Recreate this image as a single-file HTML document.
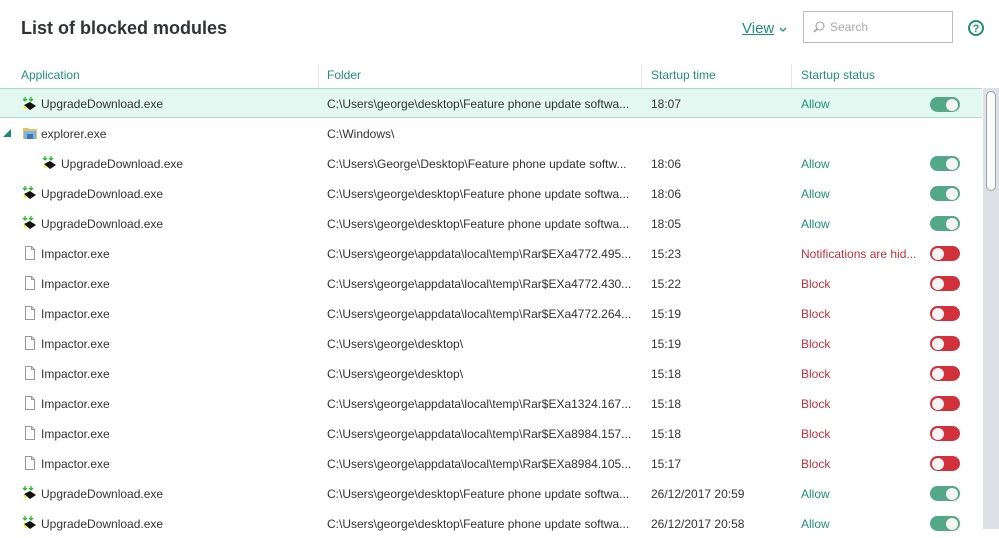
<!DOCTYPE html>
<html><head><meta charset="utf-8"><style>
*{margin:0;padding:0;box-sizing:border-box}
body{width:999px;height:529px;overflow:hidden;background:#fff;font-family:"Liberation Sans",sans-serif;font-size:12px;color:#333;position:relative}
.a{position:absolute;white-space:nowrap}
h1{position:absolute;left:21px;top:18px;font-size:18px;font-weight:bold;color:#2f3338}
.hd{position:absolute;top:68px;color:#1f9274;font-size:12px}
.sep{position:absolute;top:64px;width:1px;height:24px;background:#e6e6e6}
.row{position:absolute;left:0;width:982px;height:30px}
.row span{position:absolute;top:9px;white-space:nowrap}
.sel{background:#e3f8f0;border-top:1px solid #a9dcc9;border-bottom:1px solid #a9dcc9}
.sel span{top:8px}
.tg{position:absolute;left:930px;top:8px;width:30px;height:15px;border-radius:8px}
.tg.g{background:#52a887}.tg.r{background:#d1313b}
.tg i{position:absolute;top:1.5px;width:12px;height:12px;border-radius:50%;background:#f4f4f4}
.tg.g i{right:2px}.tg.r i{left:2px}
.al{color:#1f9274}.bl{color:#c0323a}
.ic{position:absolute;top:7px;width:16px;height:16px}
</style></head><body>
<h1>List of blocked modules</h1>
<div class="a" style="left:742px;top:20px;font-size:15px;color:#1f9274;text-decoration:underline">View</div>
<svg class="a" style="left:779px;top:27px" width="8" height="6"><path d="M1 1l3 3 3-3" stroke="#1f9274" stroke-width="1.3" fill="none"/></svg>
<div class="a" style="left:803px;top:11px;width:150px;height:32px;border:1px solid #bcbcbc"></div>
<svg class="a" style="left:813px;top:21px" width="12" height="12"><circle cx="7" cy="5" r="4" stroke="#999" fill="none"/><path d="M4 8l-3 3" stroke="#999" stroke-width="1.3"/></svg>
<div class="a" style="left:830px;top:20px;color:#aaa;font-size:12px">Search</div>
<svg class="a" style="left:967px;top:19px" width="18" height="18"><circle cx="9" cy="9" r="7" stroke="#1f9274" stroke-width="2" fill="none"/><text x="9" y="13" font-size="11" font-weight="bold" text-anchor="middle" fill="#1f9274" font-family="Liberation Sans">?</text></svg>
<div class="hd" style="left:21px">Application</div>
<div class="hd" style="left:327px">Folder</div>
<div class="hd" style="left:651px">Startup time</div>
<div class="hd" style="left:801px">Startup status</div>
<div class="sep" style="left:318px"></div><div class="sep" style="left:641px"></div><div class="sep" style="left:791px"></div>
<div class="a" style="left:0;top:88px;width:982px;height:1px;background:#e0e0e0"></div>
<div class="a" style="left:983px;top:88px;width:16px;height:441px;background:#dde0e4"></div>
<div class="a" style="left:986px;top:91px;width:10px;height:100px;background:#fbfbfb;border:1px solid #9aa0a6;border-radius:5px"></div>
<div id="rows"></div>
<script>
var U='<svg class="ic" viewBox="0 0 16 16"><path d="M3 1v4M1 3l2 2 2-2M9 1v4M7 3l2 2 2-2" stroke="#2bbb2b" stroke-width="1.3" fill="none"/><path d="M2 9l6-3 6 4-6 4z" fill="#111"/><path d="M2 10l2 3" stroke="#ee2" stroke-width="2"/></svg>';
var F='<svg class="ic" viewBox="0 0 16 16"><path d="M3.5 1.5h6l3 3v10h-9z" fill="#fff" stroke="#999"/><path d="M9.5 1.5v3h3" fill="none" stroke="#999"/></svg>';
var E='<svg class="ic" viewBox="0 0 16 16"><path d="M1 3h5l1 1h8v10H1z" fill="#e8c25a"/><rect x="2" y="6" width="12" height="8" fill="#7fb2dc"/><rect x="5" y="9" width="6" height="5" fill="#3a76b8"/></svg>';
var d=[
[U,22,'UpgradeDownload.exe','C:\\Users\\george\\desktop\\Feature phone update softwa...','18:07','Allow','g',1],
[E,22,'explorer.exe','C:\\Windows\\','','','',0],
[U,42,'UpgradeDownload.exe','C:\\Users\\George\\Desktop\\Feature phone update softw...','18:06','Allow','g',0],
[U,22,'UpgradeDownload.exe','C:\\Users\\george\\desktop\\Feature phone update softwa...','18:06','Allow','g',0],
[U,22,'UpgradeDownload.exe','C:\\Users\\george\\desktop\\Feature phone update softwa...','18:05','Allow','g',0],
[F,22,'Impactor.exe','C:\\Users\\george\\appdata\\local\\temp\\Rar$EXa4772.495...','15:23','Notifications are hid...','r',0],
[F,22,'Impactor.exe','C:\\Users\\george\\appdata\\local\\temp\\Rar$EXa4772.430...','15:22','Block','r',0],
[F,22,'Impactor.exe','C:\\Users\\george\\appdata\\local\\temp\\Rar$EXa4772.264...','15:19','Block','r',0],
[F,22,'Impactor.exe','C:\\Users\\george\\desktop\\','15:19','Block','r',0],
[F,22,'Impactor.exe','C:\\Users\\george\\desktop\\','15:18','Block','r',0],
[F,22,'Impactor.exe','C:\\Users\\george\\appdata\\local\\temp\\Rar$EXa1324.167...','15:18','Block','r',0],
[F,22,'Impactor.exe','C:\\Users\\george\\appdata\\local\\temp\\Rar$EXa8984.157...','15:18','Block','r',0],
[F,22,'Impactor.exe','C:\\Users\\george\\appdata\\local\\temp\\Rar$EXa8984.105...','15:17','Block','r',0],
[U,22,'UpgradeDownload.exe','C:\\Users\\george\\desktop\\Feature phone update softwa...','26/12/2017 20:59','Allow','g',0],
[U,22,'UpgradeDownload.exe','C:\\Users\\george\\desktop\\Feature phone update softwa...','26/12/2017 20:58','Allow','g',0]];
var h='';
d.forEach(function(r,i){
var t=88+i*30;
h+='<div class="row'+(r[7]?' sel':'')+'" style="top:'+t+'px">';
if(i==1)h+='<svg style="position:absolute;left:3px;top:11px" width="9" height="9"><path d="M8 0V8H0z" fill="#1f8a6e"/></svg>';
h+=r[0].replace('class="ic"','class="ic" style="left:'+r[1]+'px"');
h+='<span style="left:'+(r[1]+19)+'px">'+r[2]+'</span>';
h+='<span style="left:327px">'+r[3]+'</span>';
h+='<span style="left:651px">'+r[4]+'</span>';
if(r[5])h+='<span class="'+(r[6]=='g'?'al':'bl')+'" style="left:801px">'+r[5]+'</span><div class="tg '+r[6]+'"><i></i></div>';
h+='</div>';});
document.getElementById('rows').innerHTML=h;
</script>
</body></html>
